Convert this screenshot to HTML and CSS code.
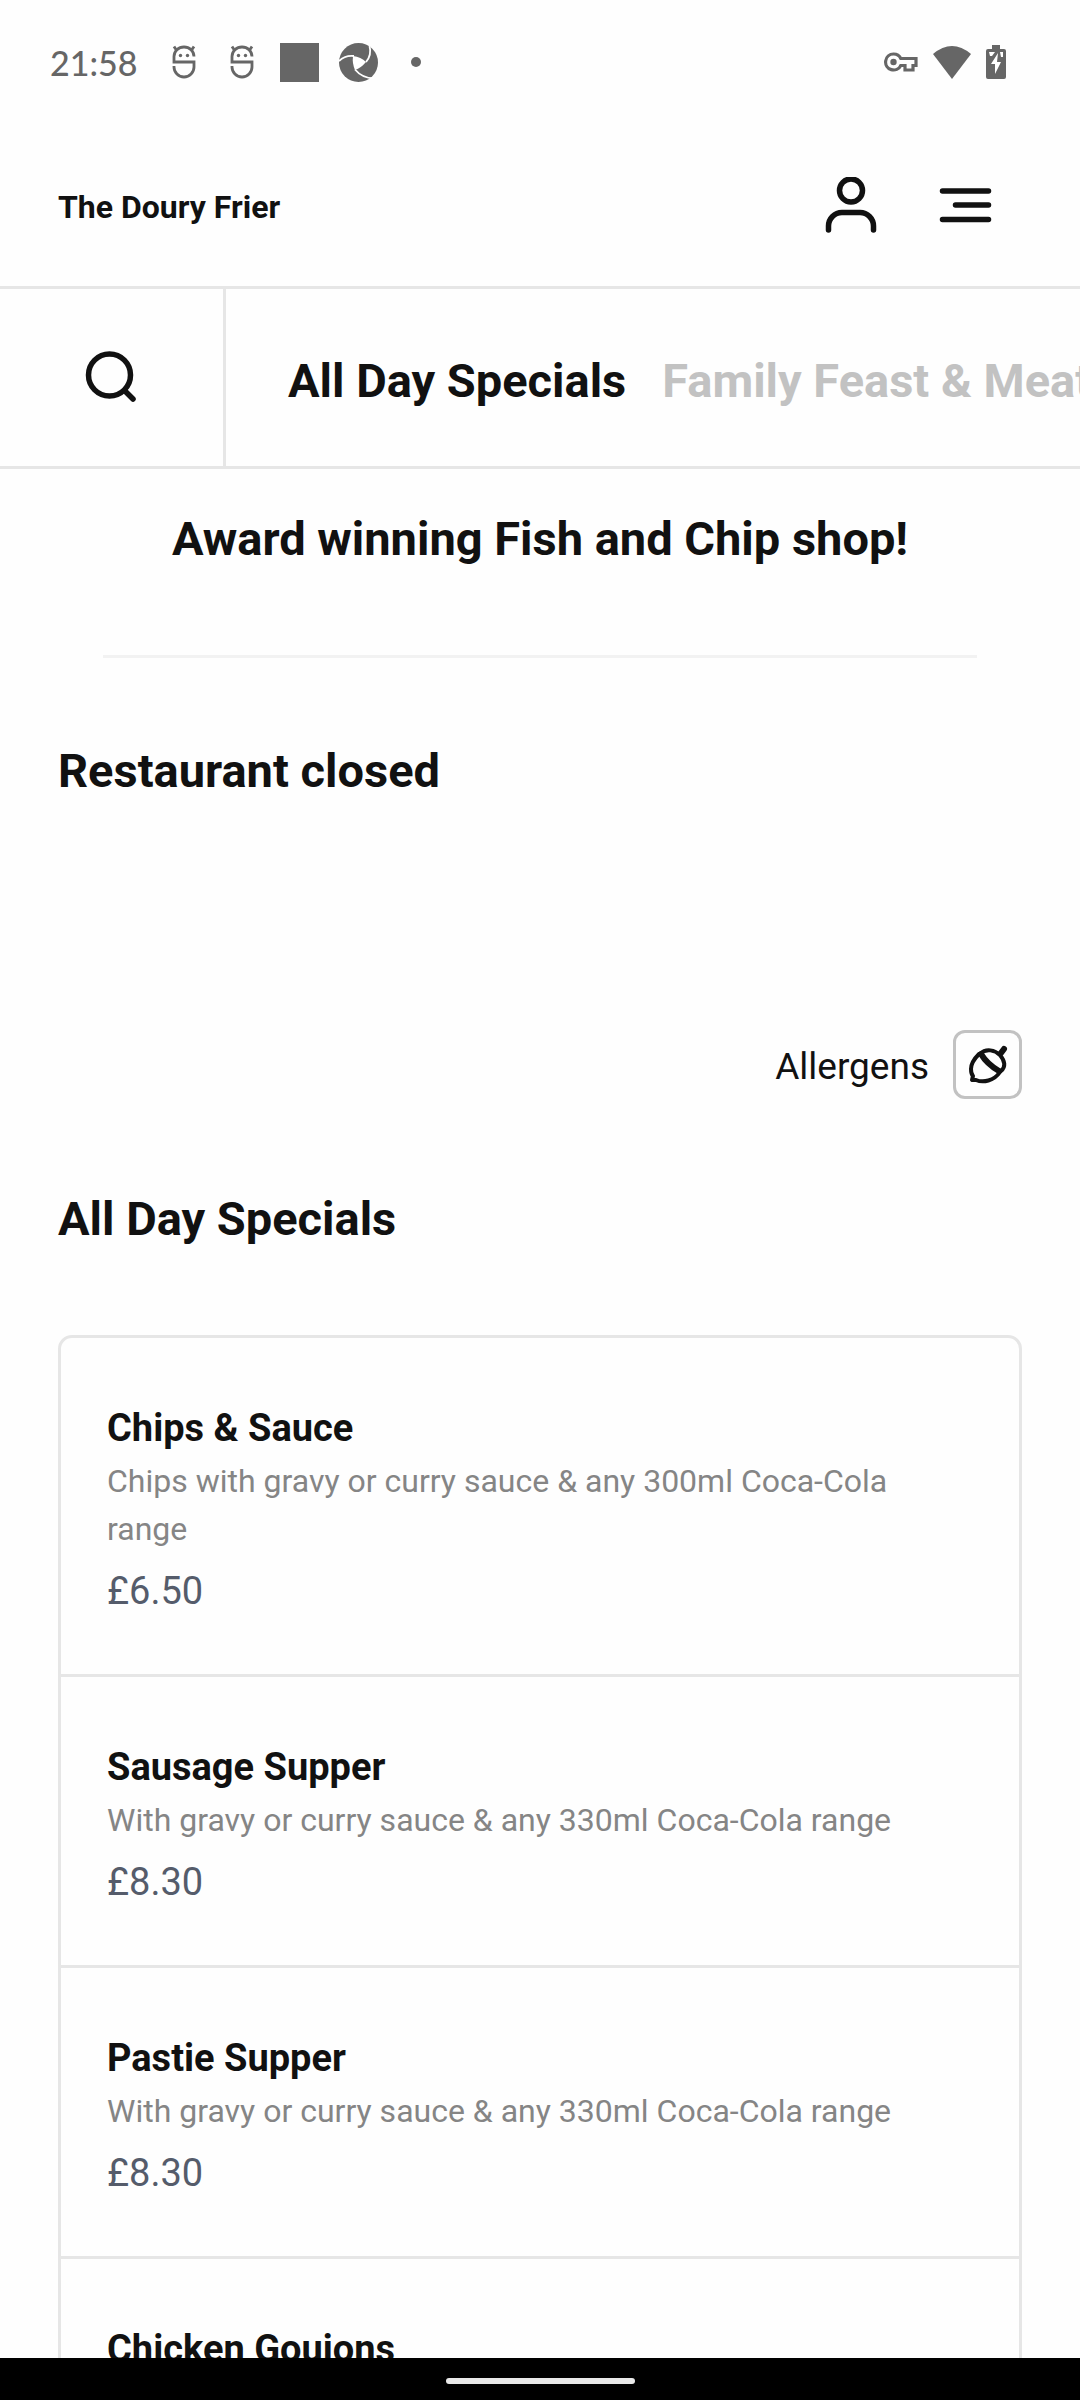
FILE: index.html
```html
<!DOCTYPE html>
<html lang="en">

<head>
    <meta charset="UTF-8">
    <meta name="viewport" content="width=device-width, initial-scale=1.0">
    <title>The Doury Frier</title>
    <link rel="stylesheet" href="styles.css">
</head>

<body>
    <div class="status-bar">
        <span class="clock">21:58</span>
        <div class="faces">
            <svg viewBox="0 0 24 34" width="24" height="34">
                <g fill="none" stroke="#666" stroke-width="2.8">
                    <path d="M22 11.500a10 9.500 0 0 0-20 0v5.500h20v5a10 10 0 0 1-20 0v-1"/>
                    <path d="M5 6L2 1.500M19 6l3-4.500"/>
                </g>
                <circle cx="8.500" cy="10.500" r="1.700" fill="#666"/>
                <circle cx="15.500" cy="10.500" r="1.700" fill="#666"/>
            </svg>
            <svg viewBox="0 0 24 34" width="24" height="34">
                <g fill="none" stroke="#666" stroke-width="2.8">
                    <path d="M22 11.500a10 9.500 0 0 0-20 0v5.500h20v5a10 10 0 0 1-20 0v-1"/>
                    <path d="M5 6L2 1.500M19 6l3-4.500"/>
                </g>
                <circle cx="8.500" cy="10.500" r="1.700" fill="#666"/>
                <circle cx="15.500" cy="10.500" r="1.700" fill="#666"/>
            </svg>
        </div>
        <span class="square"></span>
        <svg viewBox="0 0 39 39" width="39" height="39">
            <circle cx="19.500" cy="19.500" r="19.500" fill="#666"/>
            <path d="M14 13Q22 14 27 19Q22 25 16 27Q13 20 14 13Z" fill="#fff"/>
            <g fill="none" stroke="#fff" stroke-width="1.800">
                <path d="M0 18Q6 12 15 13"/>
                <path d="M30.500 3Q33 12 27 19"/>
                <path d="M16 26.500Q23 35 35 35.500"/>
            </g>
        </svg>
        <span class="dot"></span>
        <div class="status-right">
            <svg viewBox="0 0 34 20" width="34" height="20">
                <path d="M9.500 2a8 8 0 1 0 7.300 11.500H21V18h8v-4.500h3v-7H16.800A8 8 0 0 0 9.500 2Z" fill="none" stroke="#666" stroke-width="3.200"/>
                <circle cx="9.500" cy="10" r="3.200" fill="#666"/>
            </svg>
            <svg viewBox="0 0 38 33" width="38" height="33">
                <path d="M0 8Q19-8 38 8L19 33Z" fill="#666"/>
            </svg>
            <svg viewBox="0 0 20 34" width="20" height="34">
                <path d="M6 0h8v4h4a2 2 0 0 1 2 2v26a2 2 0 0 1-2 2H2a2 2 0 0 1-2-2V6a2 2 0 0 1 2-2h4Z" fill="#666"/>
                <path d="M12 8L5 19h4v10l6-12h-4ZM3 7h6l-3 4H4ZM14 7h3v5h-2Z" fill="#fff"/>
            </svg>
        </div>
    </div>

    <header>
        <a href="#" class="brand">The Doury Frier</a>
        <div class="header-buttons">
            <button type="button" class="icon-btn" aria-label="Account">
                <svg viewBox="0 0 54 60" width="54" height="60" fill="none" stroke="#111" stroke-width="5.500" stroke-linecap="round">
                    <circle cx="27" cy="13.500" r="11.500"/>
                    <path d="M4.500 53v-4a13.500 13.500 0 0 1 13.500-13.500h18a13.500 13.500 0 0 1 13.500 13.500v4"/>
                </svg>
            </button>
            <button type="button" class="icon-btn" aria-label="Menu">
                <svg viewBox="0 0 54 60" width="54" height="60" fill="none" stroke="#111" stroke-width="5.500" stroke-linecap="round">
                    <path d="M4.500 14h46M17.500 28h33M4.500 42.500h46"/>
                </svg>
            </button>
        </div>
    </header>

    <nav class="category-bar">
        <button type="button" class="search-btn" aria-label="Search">
            <svg viewBox="0 0 54 54" width="54" height="54" fill="none" stroke="#111" stroke-width="5.500" stroke-linecap="round">
                <circle cx="24.500" cy="24" r="21"/>
                <path d="M40 40l8 8"/>
            </svg>
        </button>
        <div class="categories">
            <a href="#specials" class="active">All Day Specials</a>
            <a href="#family">Family Feast &amp; Meat Boxes</a>
        </div>
    </nav>

    <main>
        <h2 class="tagline">Award winning Fish and Chip shop!</h2>
        <hr>
        <h2>Restaurant closed</h2>

        <div class="allergens">
            <label for="allergenBtn">Allergens</label>
            <button type="button" id="allergenBtn" class="allergen-btn">
                <svg viewBox="0 0 40 40" width="40" height="40" fill="none" stroke="#111" stroke-width="4" stroke-linecap="round" stroke-linejoin="round">
                    <path d="M11 9C6 14 3 18 3 24Q3 29 5 31L4 35L8 35C15 38 26 36 32 27"/>
                    <path d="M12 9C18 3 27 5 32 10C37 16 38 22 33 26"/>
                    <path d="M13 9Q19 19 31 26" stroke-width="6"/>
                    <path d="M33 8l3-4" stroke-width="6"/>
                </svg>
            </button>
        </div>

        <h2 id="specials">All Day Specials</h2>
        <ul class="menu-list">
            <li>
                <h3>Chips &amp; Sauce</h3>
                <p class="description">Chips with gravy or curry sauce &amp; any 300ml Coca-Cola range</p>
                <p class="price">£6.50</p>
            </li>
            <li>
                <h3>Sausage Supper</h3>
                <p class="description">With gravy or curry sauce &amp; any 330ml Coca-Cola range</p>
                <p class="price">£8.30</p>
            </li>
            <li>
                <h3>Pastie Supper</h3>
                <p class="description">With gravy or curry sauce &amp; any 330ml Coca-Cola range</p>
                <p class="price">£8.30</p>
            </li>
            <li>
                <h3>Chicken Goujons</h3>
            </li>
        </ul>
    </main>

    <div class="nav-bar">
        <span class="home-pill"></span>
    </div>
</body>

</html>
```
FILE: styles.css
```css
* {
    box-sizing: border-box;
}

body {
    margin: 0;
    height: 100vh;
    display: flex;
    flex-direction: column;
    overflow: hidden;
    background-color: #fefefe;
    color: #111;
    font-family: Roboto, Arial, sans-serif;
}

h2,
h3,
p {
    margin: 0;
}

h2 {
    font-size: 47px;
    line-height: 60px;
    font-weight: 700;
}

a {
    color: inherit;
    text-decoration: none;
}

button {
    display: flex;
    align-items: center;
    justify-content: center;
    padding: 0;
    border: none;
    background: none;
    cursor: pointer;
}

svg {
    display: block;
    flex: none;
}

/* Status bar */
.status-bar {
    flex: none;
    display: flex;
    align-items: center;
    height: 124px;
    padding: 0 74px 0 50px;
    color: #666;
}

.clock {
    font-family: Lato, sans-serif;
    font-size: 34px;
    font-weight: 500;
    margin-right: 35px;
}

.faces {
    display: flex;
    gap: 34px;
    margin-right: 26px;
}

.square {
    width: 39px;
    height: 39px;
    margin-right: 20px;
    background-color: #666;
}

.dot {
    width: 10px;
    height: 10px;
    margin-left: 33px;
    border-radius: 50%;
    background-color: #666;
}

.status-right {
    display: flex;
    align-items: center;
    gap: 15px;
    margin-left: auto;
}

/* Header */
header {
    flex: none;
    display: flex;
    align-items: center;
    justify-content: space-between;
    height: 165px;
    padding: 4px 88px 0 58px;
    border-bottom: 3px solid #e6e6e6;
}

.brand {
    font-size: 32px;
    font-weight: 700;
}

.header-buttons {
    display: flex;
    gap: 60px;
}

.category-bar {
    flex: none;
    display: flex;
    height: 180px;
    border-bottom: 3px solid #e6e6e6;
}

.search-btn {
    flex: none;
    width: 226px;
    border-right: 3px solid #e6e6e6;
}

.categories {
    flex: 1;
    display: flex;
    align-items: center;
    gap: 36px;
    padding: 6px 0 0 62px;
    overflow: hidden;
    white-space: nowrap;
    font-size: 47px;
    font-weight: 700;
    color: #c2c2c2;
}

.categories .active {
    color: #111;
}

/* Menu */
main {
    flex: 1;
    min-height: 0;
    overflow: hidden;
    padding: 40px 58px 0;
}

.tagline {
    text-align: center;
}

hr {
    height: 3px;
    margin: 86px 45px 83px;
    border: none;
    background-color: #f2f2f2;
}

.allergens {
    display: flex;
    align-items: center;
    justify-content: flex-end;
    gap: 24px;
    margin: 229px 0 90px;
    font-size: 37px;
}

.allergens label {
    padding-top: 4px;
}

.allergen-btn {
    width: 69px;
    height: 69px;
    border: 3px solid #c2c2c2;
    border-radius: 12px;
}

.menu-list {
    list-style: none;
    margin: 86px 0 0;
    padding: 0;
    border: 3px solid #e6e6e6;
    border-radius: 14px;
}

.menu-list li {
    padding: 61px 46px 53px;
    border-bottom: 3px solid #e6e6e6;
}

.menu-list li:last-child {
    border-bottom: none;
}

.menu-list h3 {
    font-size: 38px;
    line-height: 58px;
    font-weight: 700;
}

.description {
    max-width: 800px;
    color: #858585;
    font-size: 32px;
    line-height: 48px;
}

.price {
    margin-top: 8px;
    color: #555c6b;
    font-size: 38px;
    line-height: 60px;
}

/* Bottom navigation */
.nav-bar {
    flex: none;
    display: flex;
    align-items: center;
    justify-content: center;
    height: 42px;
    padding-top: 3px;
    background-color: #000;
}

.home-pill {
    width: 189px;
    height: 6px;
    border-radius: 3px;
    background-color: #e9e9e9;
}
```
